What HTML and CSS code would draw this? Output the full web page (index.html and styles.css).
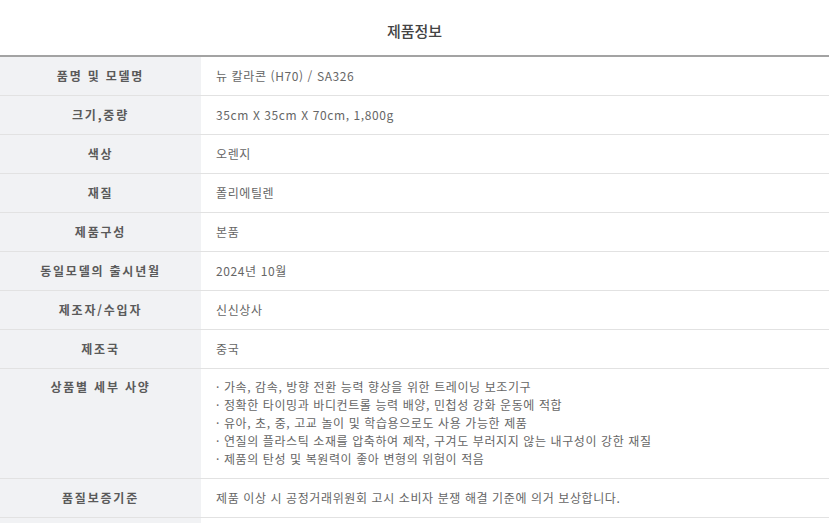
FILE: index.html
```html
<!DOCTYPE html>
<html lang="ko">
<head>
  <meta charset="UTF-8" />
  <meta name="viewport" content="width=device-width, initial-scale=1.0"/>
  <title>제품정보</title>
  <link rel="stylesheet" href="styles.css">
</head>
<body>

  <!-- 제품정보 -->
  <div class="info-box">
    <h2 class="info-title">제품정보</h2>
    <table class="info-table">
      <tbody>
        <tr><th>품명 및 모델명</th><td>뉴 칼라콘 (H70) / SA326</td></tr>
        <tr><th>크기,중량</th><td>35cm X 35cm X 70cm, 1,800g</td></tr>
        <tr><th>색상</th><td>오렌지</td></tr>
        <tr><th>재질</th><td>폴리에틸렌</td></tr>
        <tr><th>제품구성</th><td>본품</td></tr>
        <tr><th>동일모델의 출시년월</th><td>2024년 10월</td></tr>
        <tr><th>제조자/수입자</th><td>신신상사</td></tr>
        <tr><th>제조국</th><td>중국</td></tr>
        <tr class="tall">
          <th>상품별 세부 사양</th>
          <td>
            · 가속, 감속, 방향 전환 능력 향상을 위한 트레이닝 보조기구<br>
            · 정확한 타이밍과 바디컨트롤 능력 배양, 민첩성 강화 운동에 적합<br>
            · 유아, 초, 중, 고교 놀이 및 학습용으로도 사용 가능한 제품<br>
            · 연질의 플라스틱 소재를 압축하여 제작, 구겨도 부러지지 않는 내구성이 강한 재질<br>
            · 제품의 탄성 및 복원력이 좋아 변형의 위험이 적음
          </td>
        </tr>
        <tr><th>품질보증기준</th><td>제품 이상 시 공정거래위원회 고시 소비자 분쟁 해결 기준에 의거 보상합니다.</td></tr>
        <tr class="empty"><th></th><td></td></tr>
      </tbody>
    </table>
  </div>

</body>
</html>
```

FILE: styles.css
```css
body {
  font-family: "Noto Sans CJK KR", "Noto Sans", sans-serif;
  margin: 0;
  background-color: #fff;
}

.info-box {
  width: 829px;
}

.info-title {
  margin: 0;
  height: 55px;
  line-height: 62px;
  text-align: center;
  font-size: 15px;
  font-weight: 500;
  color: #444;
}

.info-table {
  width: 100%;
  border-collapse: collapse;
  border-top: 2px solid #a3a3a3;
}

.info-table th,
.info-table td {
  height: 36px;
  padding: 0 0 2px 0;
  border-bottom: 1px solid #e2e2e2;
  font-size: 12px;
}

.info-table th {
  width: 201px;
  background-color: #f1f2f4;
  color: #5a5a5a;
  font-weight: 700;
  letter-spacing: 1.8px;
  text-align: center;
}

.info-table td {
  padding-left: 15px;
  color: #666;
  font-weight: 400;
  letter-spacing: 0.6px;
}

.info-table .tall th,
.info-table .tall td {
  height: 90px;
  padding-top: 9px;
  padding-bottom: 10px;
  vertical-align: top;
  line-height: 18px;
}
```
